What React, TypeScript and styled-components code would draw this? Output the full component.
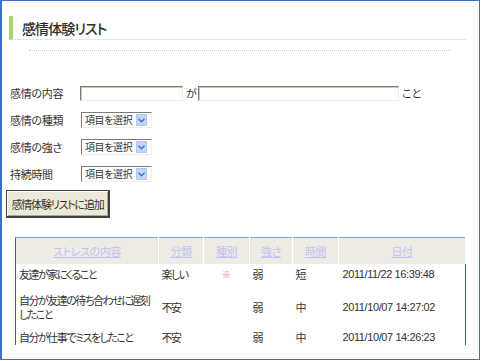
import React from "react";
import styled, { createGlobalStyle } from "styled-components";

const GlobalStyle = createGlobalStyle`
  html, body { margin: 0; padding: 0; background: #fff; }
  body {
    font-family: "Noto Sans CJK JP", "Liberation Sans", sans-serif;
    font-size: 11px;
    color: #333;
    font-feature-settings: "palt";
  }
  * { box-sizing: border-box; }
`;

const Frame = styled.div`
  width: 480px;
  height: 360px;
  border: 1px solid #3e6dcb;
  border-left-width: 2px;
`;

const Viewport = styled.div`
  height: 344px;
  overflow: hidden;
`;

const TitleBar = styled.h1`
  margin: 15px 0 0 7px;
  width: 457px;
  height: 24px;
  border-left: 4px solid #a6d36a;
  border-bottom: 1px solid #e6e6e6;
  padding-left: 9px;
  display: flex;
  align-items: center;
  font-size: 14px;
  letter-spacing: -0.9px;
  font-weight: 500;
  color: #2e2e2e;
`;

const Dotted = styled.div`
  margin: 10px 0 0 27px;
  width: 422px;
  border-top: 1px dotted #c8c8c8;
`;

const Form = styled.div`
  margin-top: 34px;
  padding-left: 8px;
  display: flex;
  flex-direction: column;
  gap: 11px;
`;

const FormRow = styled.div`
  display: flex;
  align-items: center;
  height: 16px;
  white-space: nowrap;
`;

const Label = styled.span`
  width: 70px;
  color: #333;
  letter-spacing: -0.3px;
`;

const TextInput = styled.div<{ $w: number }>`
  width: ${(p) => p.$w}px;
  height: 15px;
  border: 1px solid;
  border-color: #7b7b70 #f1efe2 #f1efe2 #7b7b70;
  box-shadow: inset 1px 1px 0 #c9c6b8;
  background: #fff;
`;

const Conj = styled.span`
  padding-left: 3px;
  width: 15px;
`;

const Suffix = styled.span`
  padding-left: 3px;
`;

const SelectBox = styled.div`
  width: 71px;
  height: 16px;
  margin-left: 1px;
  border: 1px solid;
  border-color: #7b7b70 #f1efe2 #f1efe2 #7b7b70;
  display: flex;
  align-items: center;
  padding-left: 3px;
  background: #fff;
`;

const SelectText = styled.span`
  flex: 1;
  font-size: 10px;
  letter-spacing: -0.4px;
  line-height: 12px;
`;

const ArrowBox = styled.span`
  width: 11px;
  height: 12px;
  margin-right: 4px;
  background: #c3d5fb;
  border: 1px solid #b3c7f2;
  display: flex;
  align-items: center;
  justify-content: center;
`;

const AddButton = styled.button`
  margin: 8px 0 0 4px;
  width: 104px;
  height: 28px;
  background: #ece9d8;
  border: 1px solid #404040;
  border-right-width: 2px;
  border-bottom-width: 2px;
  box-shadow: inset 1px 1px 0 #fff, inset -1px -1px 0 #aca899;
  font-family: inherit;
  font-size: 11px;
  letter-spacing: -1.2px;
  white-space: nowrap;
  color: #333;
  padding: 0;
  font-feature-settings: "palt";
`;

const Table = styled.table`
  margin: 19px 0 0 13px;
  width: 451px;
  border-collapse: collapse;
  border-top: 1px solid #7f9fdc;
  border-left: 1px solid #4b5b7b;
  border-right: 1px solid #4b5b7b;
  table-layout: fixed;
`;

const Th = styled.th<{ $w: number }>`
  width: ${(p) => p.$w}px;
  height: 26px;
  background: #eeebe4;
  border-right: 1px solid #fff;
  font-weight: normal;
  font-size: 11px;
  letter-spacing: -0.4px;
  padding: 0;
  text-align: center;
  color: #c2c2f6;
  text-decoration: underline;
  white-space: nowrap;
`;

const Tr = styled.tr<{ $h: number }>`
  height: ${(p) => p.$h}px;
`;

const Td = styled.td<{ $center?: boolean }>`
  padding: 0 3px;
  vertical-align: middle;
  color: #333;
  line-height: 14px;
  letter-spacing: -1.5px;
  white-space: nowrap;
  overflow: hidden;
  text-align: ${(p) => (p.$center ? "center" : "left")};
`;

const DateTd = styled(Td)`
  padding-left: 4px;
  font-family: "Liberation Sans", Arial, sans-serif;
  font-size: 11px;
  letter-spacing: -0.4px;
`;

const Mark = styled.span`
  color: #d47a7a;
  font-size: 9px;
  letter-spacing: 0;
`;

const Chevron = () => (
  <svg width="7" height="5" viewBox="0 0 7 5">
    <path d="M0.5 0.8 L3.5 3.8 L6.5 0.8" fill="none" stroke="#4d6cb5" strokeWidth="1.4" />
  </svg>
);

const Select = () => (
  <SelectBox>
    <SelectText>項目を選択</SelectText>
    <ArrowBox>
      <Chevron />
    </ArrowBox>
  </SelectBox>
);

const rows = [
  { h: 21, text: ["友達が家にくること"], cat: "楽しい", mark: true, str: "弱", time: "短", date: "2011/11/22 16:39:48" },
  { h: 44, text: ["自分が友達の待ち合わせに遅刻", "したこと"], cat: "不安", mark: false, str: "弱", time: "中", date: "2011/10/07 14:27:02" },
  { h: 16, text: ["自分が仕事でミスをしたこと"], cat: "不安", mark: false, str: "弱", time: "中", date: "2011/10/07 14:26:23" },
];

export default function App() {
  return (
    <>
      <GlobalStyle />
      <Frame>
        <Viewport>
          <TitleBar>感情体験リスト</TitleBar>
          <Dotted />
          <Form>
            <FormRow>
              <Label>感情の内容</Label>
              <TextInput $w={103} />
              <Conj>が</Conj>
              <TextInput $w={201} />
              <Suffix>こと</Suffix>
            </FormRow>
            <FormRow>
              <Label>感情の種類</Label>
              <Select />
            </FormRow>
            <FormRow>
              <Label>感情の強さ</Label>
              <Select />
            </FormRow>
            <FormRow>
              <Label>持続時間</Label>
              <Select />
            </FormRow>
          </Form>
          <AddButton>感情体験リストに追加</AddButton>
          <Table>
            <thead>
              <tr>
                <Th $w={143}>ストレスの内容</Th>
                <Th $w={45}>分類</Th>
                <Th $w={46}>種別</Th>
                <Th $w={43}>強さ</Th>
                <Th $w={46}>時間</Th>
                <Th $w={127}>日付</Th>
              </tr>
            </thead>
            <tbody>
              {rows.map((r, i) => (
                <Tr $h={r.h} key={i}>
                  <Td>
                    {r.text.map((t, j) => (
                      <React.Fragment key={j}>
                        {j > 0 && <br />}
                        {t}
                      </React.Fragment>
                    ))}
                  </Td>
                  <Td>{r.cat}</Td>
                  <Td $center>{r.mark && <Mark>※</Mark>}</Td>
                  <Td>{r.str}</Td>
                  <Td>{r.time}</Td>
                  <DateTd>{r.date}</DateTd>
                </Tr>
              ))}
            </tbody>
          </Table>
        </Viewport>
      </Frame>
    </>
  );
}
